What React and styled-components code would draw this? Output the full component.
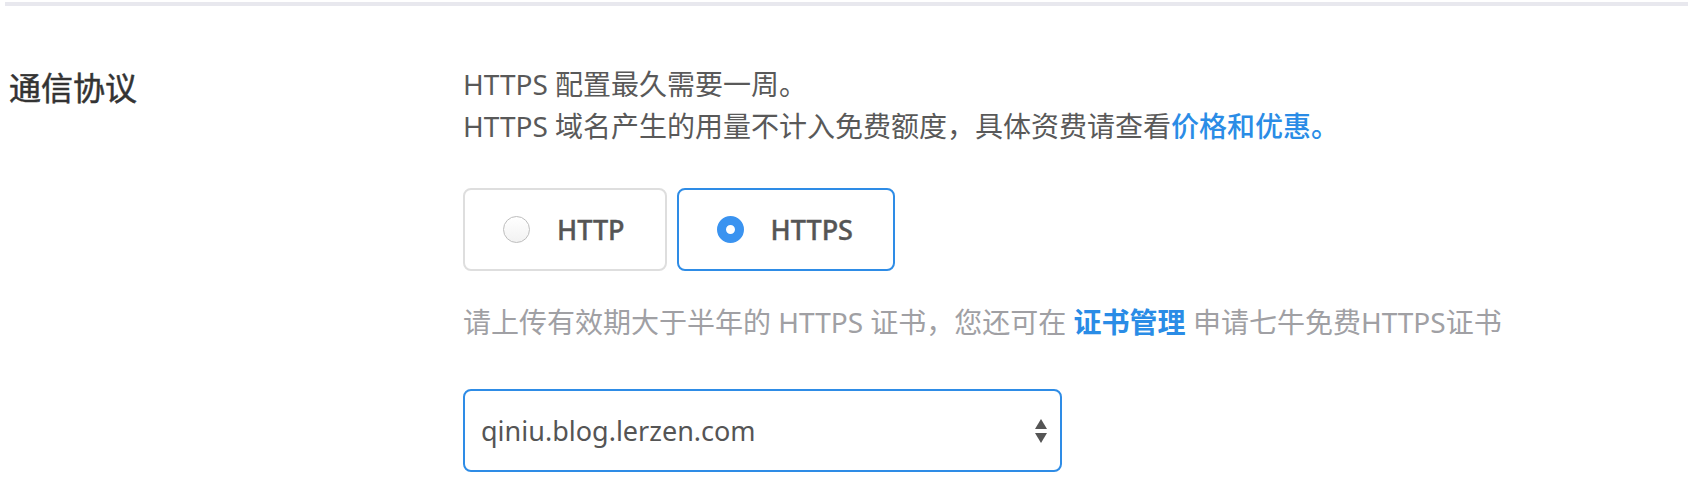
import styled, { createGlobalStyle } from "styled-components";

const GlobalStyle = createGlobalStyle`
  html, body {
    margin: 0;
    padding: 0;
    background: #fff;
  }
  body {
    font-family: "Noto Sans", "Noto Sans CJK SC", sans-serif;
  }
`;

const TopBar = styled.div`
  height: 4px;
  margin: 2px 0 0 5px;
  background: #e8e8ee;
`;

const Section = styled.section`
  display: grid;
  grid-template-columns: 454px 1fr;
  padding: 57px 0 0 9px;
`;

const Label = styled.h3`
  margin: 0;
  padding-top: 4px;
  font-size: 32px;
  line-height: 42px;
  font-weight: 400;
  color: #333;
  -webkit-text-stroke: 0.5px #333;
`;

const Content = styled.div`
  display: flex;
  flex-direction: column;
  align-items: flex-start;
`;

const Notice = styled.p`
  margin: 0;
  font-size: 28px;
  line-height: 42px;
  color: #595959;
`;

const Link = styled.a`
  color: #2a8ce6;
  text-decoration: none;
  font-weight: ${(p) => (p.bold ? 700 : 500)};
  cursor: pointer;
`;

const RadioGroup = styled.div`
  display: flex;
  gap: 10px;
  margin-top: 41px;
`;

const RadioCard = styled.label`
  display: flex;
  align-items: center;
  gap: 27px;
  box-sizing: border-box;
  height: 83px;
  padding: 0 40px 0 38px;
  border: 2px solid ${(p) => (p.checked ? "#2e8ce6" : "#dedede")};
  border-radius: 8px;
  font-size: 27px;
  font-weight: 500;
  color: #555;
  -webkit-text-stroke: 0.4px #555;
  cursor: pointer;
`;

const RadioDot = styled.span`
  box-sizing: border-box;
  width: 27px;
  height: 27px;
  border-radius: 50%;
  flex-shrink: 0;
  ${(p) =>
    p.checked
      ? `
    background: #fff;
    border: 9.5px solid #3a93f0;
  `
      : `
    background: linear-gradient(#fff, #f2f2f2);
    border: 1.5px solid #bdbdbd;
  `}
`;

const Hint = styled.p`
  margin: 30px 0 0;
  font-size: 28px;
  line-height: 42px;
  color: #a0a0a4;
`;

const Select = styled.div`
  display: flex;
  align-items: center;
  justify-content: space-between;
  box-sizing: border-box;
  width: 599px;
  height: 83px;
  margin-top: 46px;
  padding: 0 11px 0 16px;
  border: 2px solid #2e8ce6;
  border-radius: 8px;
  font-size: 27px;
  color: #555;
`;

const Arrows = () => (
  <svg width="16" height="28" viewBox="0 0 16 28">
    <path d="M8 2 L14 12 H2 Z" fill="#555" />
    <path d="M8 26 L14 16 H2 Z" fill="#555" />
  </svg>
);

const options = [
  { value: "http", label: "HTTP" },
  { value: "https", label: "HTTPS" },
];

export default function App() {
  const selected = "https";
  return (
    <>
      <GlobalStyle />
      <TopBar />
      <Section>
        <Label>通信协议</Label>
        <Content>
          <Notice>HTTPS 配置最久需要一周。</Notice>
          <Notice>
            HTTPS 域名产生的用量不计入免费额度，具体资费请查看
            <Link>价格和优惠。</Link>
          </Notice>
          <RadioGroup>
            {options.map((o) => (
              <RadioCard key={o.value} checked={o.value === selected}>
                <RadioDot checked={o.value === selected} />
                {o.label}
              </RadioCard>
            ))}
          </RadioGroup>
          <Hint>
            请上传有效期大于半年的 HTTPS 证书，您还可在 <Link bold>证书管理</Link>{" "}
            申请七牛免费HTTPS证书
          </Hint>
          <Select>
            <span>qiniu.blog.lerzen.com</span>
            <Arrows />
          </Select>
        </Content>
      </Section>
    </>
  );
}
